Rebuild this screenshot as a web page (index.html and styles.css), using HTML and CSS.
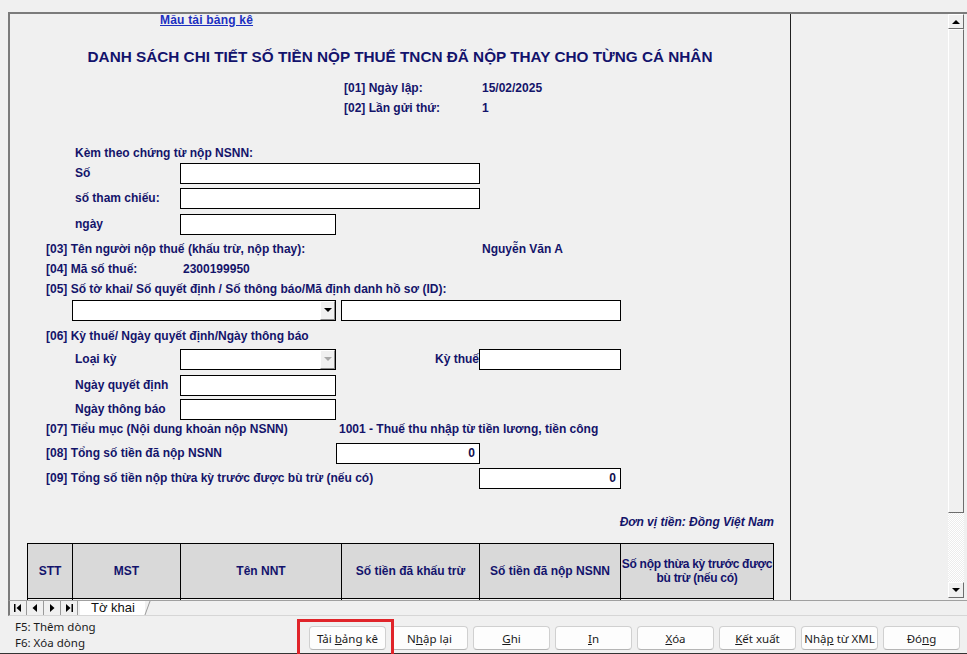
FILE: index.html
```html
<!DOCTYPE html>
<html lang="vi">
<head>
    <meta charset="UTF-8">
    <meta name="viewport" content="width=device-width, initial-scale=1.0">
    <title>Tờ khai</title>
    <link rel="stylesheet" href="styles.css">
</head>
<body>
    <div class="sheet-area">
        <div class="sheet">
            <div class="row link-row"><a href="#" class="tpl-link">Mẫu tải bảng kê</a></div>
            <h1 class="title">DANH SÁCH CHI TIẾT SỐ TIỀN NỘP THUẾ TNCN ĐÃ NỘP THAY CHO TỪNG CÁ NHÂN</h1>

            <div class="row meta mt11"><span class="meta-lbl">[01] Ngày lập:</span><span>15/02/2025</span></div>
            <div class="row meta"><span class="meta-lbl">[02] Lần gửi thứ:</span><span>1</span></div>

            <!-- chung tu nop NSNN -->
            <div class="row sub short mt26">Kèm theo chứng từ nộp NSNN:</div>
            <div class="row sub tall"><span class="lbl">Số</span><span class="box w300"></span></div>
            <div class="row sub tall mt3"><span class="lbl">số tham chiếu:</span><span class="box w300"></span></div>
            <div class="row sub tall mt4"><span class="lbl">ngày</span><span class="box w156"></span></div>

            <div class="row item mt4"><span class="lbl-03">[03] Tên người nộp thuế (khấu trừ, nộp thay):</span><span>Nguyễn Văn A</span></div>
            <div class="row item"><span class="lbl-04">[04] Mã số thuế:</span><span>2300199950</span></div>
            <div class="row item">[05] Số tờ khai/ Số quyết định / Số thông báo/Mã định danh hồ sơ (ID):</div>
            <div class="row tall id-row">
                <span class="box select w264"><span class="drop"><i class="tri"></i></span></span>
                <span class="box w280"></span>
            </div>

            <div class="row item mt5">[06] Kỳ thuế/ Ngày quyết định/Ngày thông báo</div>
            <div class="row sub tall mt2">
                <span class="lbl">Loại kỳ</span>
                <span class="box select w156"><span class="drop disabled"><i class="tri"></i></span></span>
                <span class="lbl-ky">Kỳ thuế</span>
                <span class="box w142"></span>
            </div>
            <div class="row sub tall mt4"><span class="lbl">Ngày quyết định</span><span class="box w156"></span></div>
            <div class="row sub tall mt2"><span class="lbl">Ngày thông báo</span><span class="box w156"></span></div>

            <div class="row item short"><span class="lbl-07">[07] Tiểu mục (Nội dung khoản nộp NSNN)</span><span>1001 - Thuế thu nhập từ tiền lương, tiền công</span></div>
            <div class="row item tall mt4"><span class="lbl-08">[08] Tổng số tiền đã nộp NSNN</span><span class="box num w144">0</span></div>
            <div class="row item tall mt3"><span class="lbl-09">[09] Tổng số tiền nộp thừa kỳ trước được bù trừ (nếu có)</span><span class="box num w142">0</span></div>

            <div class="row unit mt23">Đơn vị tiền: Đồng Việt Nam</div>

            <table class="grid">
                <colgroup>
                    <col style="width:45px"><col style="width:108px"><col style="width:161px">
                    <col style="width:138px"><col style="width:141px"><col style="width:153px">
                </colgroup>
                <tr>
                    <th>STT</th>
                    <th>MST</th>
                    <th>Tên NNT</th>
                    <th>Số tiền đã khấu trừ</th>
                    <th>Số tiền đã nộp NSNN</th>
                    <th class="th-wrap">Số nộp thừa kỳ trước được<br>bù trừ (nếu có)</th>
                </tr>
                <tr><td></td><td></td><td></td><td></td><td></td><td></td></tr>
            </table>
        </div>

        <div class="frozen"></div>

        <div class="vscroll">
            <div class="sbtn"><i class="tri up"></i></div>
            <div class="thumb"></div>
            <div class="track"></div>
            <div class="sbtn"><i class="tri"></i></div>
        </div>
    </div>

    <div class="tabbar">
        <span class="nav-btn">
            <svg width="8" height="8" viewBox="0 0 8 8"><rect x="0" y="0" width="1.5" height="8" fill="#000"/><path d="M7 0 L2.5 4 L7 8 Z" fill="#000"/></svg>
        </span>
        <span class="nav-btn">
            <svg width="8" height="8" viewBox="0 0 8 8"><path d="M6 0 L1.5 4 L6 8 Z" fill="#000"/></svg>
        </span>
        <span class="nav-btn">
            <svg width="8" height="8" viewBox="0 0 8 8"><path d="M2 0 L6.5 4 L2 8 Z" fill="#000"/></svg>
        </span>
        <span class="nav-btn">
            <svg width="8" height="8" viewBox="0 0 8 8"><path d="M1 0 L5.5 4 L1 8 Z" fill="#000"/><rect x="6.5" y="0" width="1.5" height="8" fill="#000"/></svg>
        </span>
        <span class="tab">Tờ khai</span>
    </div>

    <div class="footer">
        <div class="hints">
            <div>F5: Thêm dòng</div>
            <div>F6: Xóa dòng</div>
        </div>
        <div class="buttons">
            <button class="btn marked">Tải <u>b</u>ảng kê</button>
            <button class="btn">N<u>h</u>ập lại</button>
            <button class="btn"><u>G</u>hi</button>
            <button class="btn"><u>I</u>n</button>
            <button class="btn"><u>X</u>óa</button>
            <button class="btn"><u>K</u>ết xuất</button>
            <button class="btn">Nhậ<u>p</u> từ XML</button>
            <button class="btn">Đó<u>n</u>g</button>
        </div>
    </div>
</body>
</html>
```

FILE: styles.css
```css
body {
    margin: 0;
    width: 967px;
    height: 654px;
    overflow: hidden;
    background-color: #f0f0f0;
    font-family: "Liberation Sans", Arial, sans-serif;
}

/* sheet + frozen pane + scrollbar */
.sheet-area {
    display: flex;
    height: 586px;
    margin: 12px 0 0 8px;
    border-top: 2px solid #7b7b7b;
    border-left: 2px solid #7b7b7b;
    border-bottom: 1px solid #a0a0a0;
}
.sheet {
    width: 780px;
    flex: none;
    overflow: hidden;
    font-size: 12px;
    font-weight: bold;
    color: #14146a;
}
.frozen {
    width: 157px;
    flex: none;
    border-left: 1px solid #202020;
}
.vscroll {
    width: 16px;
    flex: none;
    display: flex;
    flex-direction: column;
    padding-bottom: 2px;
}
.sbtn {
    height: 13px;
    flex: none;
    display: flex;
    align-items: center;
    justify-content: center;
    border: 1px solid;
    border-color: #fff #6d6d6d #6d6d6d #fff;
    background-color: #f0f0f0;
}
.sbtn:last-child {
    height: 14px;
}
.thumb {
    height: 482px;
    flex: none;
    border: 1px solid;
    border-color: #fff #6d6d6d #6d6d6d #fff;
}
.track {
    flex: 1;
    background-image: repeating-conic-gradient(#ffffff 0 25%, #ececec 0 50%);
    background-size: 2px 2px;
}
.tri {
    display: block;
    width: 0;
    height: 0;
    border-left: 4px solid transparent;
    border-right: 4px solid transparent;
    border-top: 4px solid #000;
}
.tri.up {
    border-top: none;
    border-bottom: 4px solid #000;
}

/* form rows */
.row {
    display: flex;
    align-items: center;
    height: 20px;
    white-space: nowrap;
}
.row.tall {
    height: 22px;
}
.row.short {
    height: 18px;
}
.mt2 { margin-top: 2px; }
.mt3 { margin-top: 3px; }
.mt4 { margin-top: 4px; }
.mt5 { margin-top: 5px; }
.mt11 { margin-top: 11px; }
.mt23 { margin-top: 23px; }
.mt26 { margin-top: 26px; }

.link-row {
    height: 11px;
    padding-left: 150px;
}
.tpl-link {
    color: #1c2fc0;
    font-size: 12px;
    letter-spacing: 0.2px;
    text-decoration: underline;
}
.title {
    margin: 22px 0 0;
    height: 20px;
    line-height: 20px;
    font-size: 15.3px;
    text-align: center;
    white-space: nowrap;
    color: #13136c;
}
.meta {
    padding-left: 334px;
}
.meta-lbl {
    width: 138px;
}
.sub {
    padding-left: 65px;
}
.lbl {
    width: 105px;
}
.item {
    padding-left: 36px;
}
.lbl-03 { width: 436px; }
.lbl-04 { width: 137px; }
.lbl-07 { width: 293px; }
.lbl-08 { width: 290px; }
.lbl-09 { width: 433px; }
.lbl-ky {
    width: 143px;
    text-align: right;
}

.box {
    box-sizing: border-box;
    height: 21px;
    background-color: #fff;
    border: 1px solid #000;
}
.box.num {
    text-align: right;
    padding: 0 4px;
    line-height: 19px;
    color: #10104f;
}
.w142 { width: 142px; }
.w144 { width: 144px; }
.w156 { width: 156px; }
.w264 { width: 264px; }
.w280 { width: 280px; }
.w300 { width: 300px; }

.id-row {
    padding-left: 62px;
    gap: 5px;
}
.select {
    display: flex;
    justify-content: flex-end;
}
.drop {
    width: 15px;
    display: flex;
    align-items: center;
    justify-content: center;
    box-sizing: border-box;
    border: 1px solid;
    border-color: #fff #8a8a8a #8a8a8a #fff;
    background-color: #f0f0f0;
}
.drop.disabled .tri {
    border-top-color: #a8a8a8;
}

.unit {
    justify-content: flex-end;
    padding-right: 16px;
    font-style: italic;
}

/* bang ke */
.grid {
    margin: 11px 0 0 17px;
    border-collapse: collapse;
    table-layout: fixed;
    width: 746px;
}
.grid th {
    height: 54px;
    padding: 0;
    background-color: #d9d9d9;
    border: 1px solid #000;
    font-size: 12px;
    color: #13136c;
    white-space: nowrap;
}
.grid .th-wrap {
    font-size: 12px;
    letter-spacing: -0.3px;
    line-height: 14px;
}
.grid td {
    height: 20px;
    border: 1px solid #000;
}

/* sheet tabs */
.tabbar {
    display: flex;
    height: 14px;
    margin-left: 8px;
    border-left: 2px solid #7b7b7b;
    border-bottom: 1px solid #d6d6d6;
}
.nav-btn {
    width: 16px;
    display: flex;
    align-items: center;
    justify-content: center;
    border-right: 1px solid #9a9a9a;
}
.tab {
    position: relative;
    margin-left: 2px;
    padding: 0 10px 0 11px;
    background-color: #fff;
    font-size: 13px;
    line-height: 14px;
    color: #111;
}
.tab::after {
    content: "";
    position: absolute;
    top: 0;
    bottom: 0;
    right: -3px;
    width: 1px;
    background-color: #9a9a9a;
    transform: skewX(-20deg);
}

/* footer */
.footer {
    display: flex;
    height: 37px;
    border-bottom: 1px solid #333;
}
.hints {
    padding: 3px 0 0 15px;
    font-family: "Noto Sans", sans-serif;
    font-size: 11.5px;
    line-height: 16px;
    color: #1a1a1a;
}
.buttons {
    display: flex;
    gap: 5px;
    margin-left: auto;
    margin-right: 7px;
    padding-top: 10px;
}
.btn {
    width: 77px;
    height: 24px;
    padding: 0;
    background-color: #fdfdfd;
    border: 1px solid #d0d0d0;
    border-bottom-color: #b5b5b5;
    border-radius: 4px;
    font-family: "Noto Sans", sans-serif;
    font-size: 11.5px;
    color: #1a1a1a;
}
.btn.marked {
    position: relative;
}
.btn.marked::after {
    content: "";
    position: absolute;
    left: -13px;
    right: -9px;
    top: -8px;
    bottom: -8px;
    border: 3px solid #e0242a;
}
```
